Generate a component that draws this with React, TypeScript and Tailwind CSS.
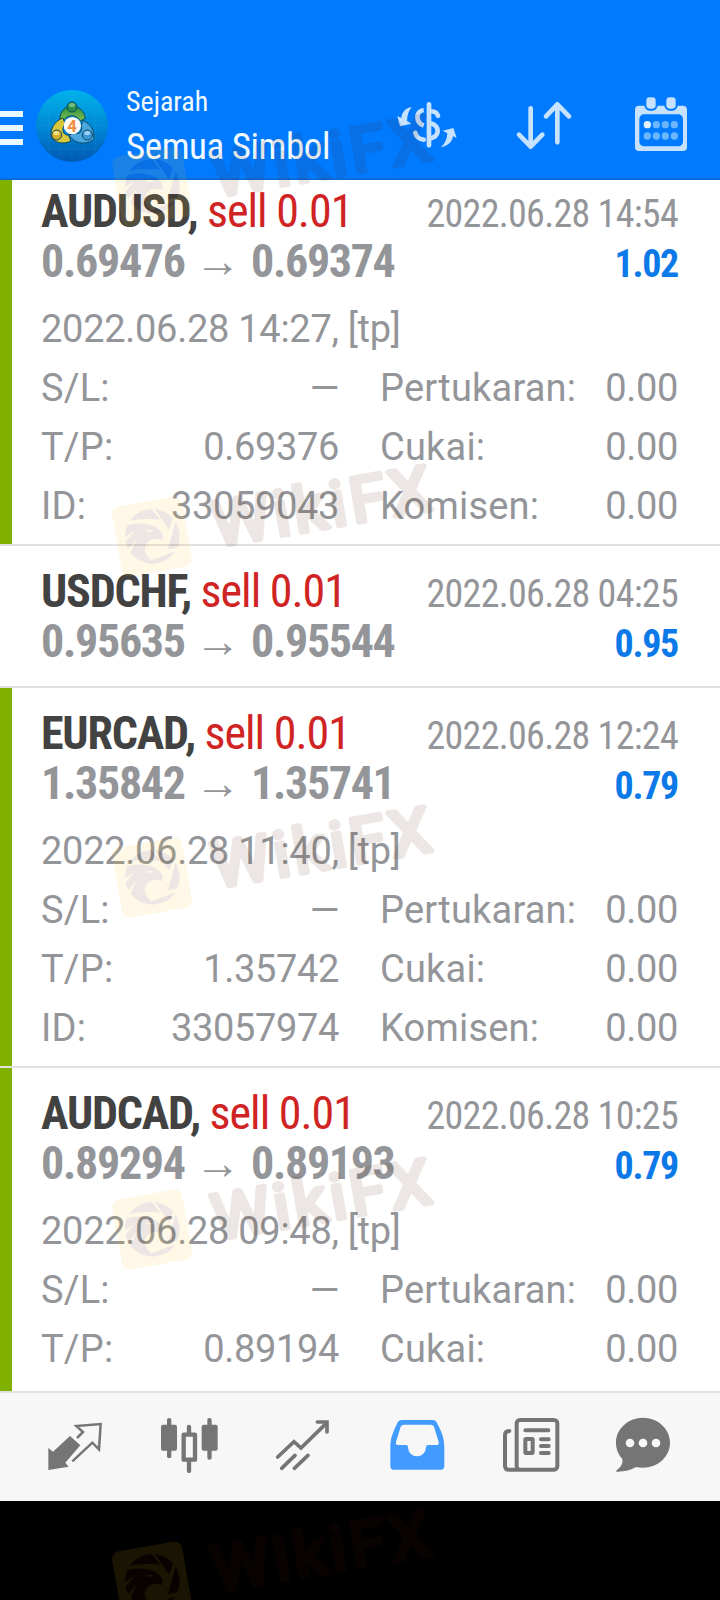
type Details = {
  opened: string;
  tp: string;
  id?: string;
};

type Deal = {
  symbol: string;
  volume: string;
  open: string;
  close: string;
  closedAt: string;
  profit: string;
  details?: Details;
};

const deals: Deal[] = [
  {
    symbol: "AUDUSD",
    volume: "0.01",
    open: "0.69476",
    close: "0.69374",
    closedAt: "2022.06.28 14:54",
    profit: "1.02",
    details: { opened: "2022.06.28 14:27", tp: "0.69376", id: "33059043" },
  },
  {
    symbol: "USDCHF",
    volume: "0.01",
    open: "0.95635",
    close: "0.95544",
    closedAt: "2022.06.28 04:25",
    profit: "0.95",
  },
  {
    symbol: "EURCAD",
    volume: "0.01",
    open: "1.35842",
    close: "1.35741",
    closedAt: "2022.06.28 12:24",
    profit: "0.79",
    details: { opened: "2022.06.28 11:40", tp: "1.35742", id: "33057974" },
  },
  {
    symbol: "AUDCAD",
    volume: "0.01",
    open: "0.89294",
    close: "0.89193",
    closedAt: "2022.06.28 10:25",
    profit: "0.79",
    details: { opened: "2022.06.28 09:48", tp: "0.89194" },
  },
];

const watermarkTops = [146, 496, 837, 1189, 1541];

function Logo() {
  return (
    <svg className="w-[72px] h-[72px] shrink-0 mt-[10px]" viewBox="17 31 216 216">
      <defs>
        <linearGradient id="sky" x1="0" y1="0" x2="0" y2="1">
          <stop offset="0" stopColor="#00b2ea" />
          <stop offset="0.5" stopColor="#0089d6" />
          <stop offset="1" stopColor="#0058b4" />
        </linearGradient>
        <linearGradient id="green" x1="0" y1="0" x2="0" y2="1">
          <stop offset="0" stopColor="#2f8f45" />
          <stop offset="1" stopColor="#7cc04c" />
        </linearGradient>
      </defs>
      <circle cx="125" cy="139" r="108" fill="url(#sky)" />
      <g stroke="#4cc4ee" strokeOpacity="0.18" strokeWidth="1.5">
        <path d="M55 58V220M90 37V241M125 31V247M160 37V241M195 58V220" />
        <path d="M44 68H206M23 103H227M17 138H233M23 173H227M44 208H206" />
      </g>
      <g stroke="#0b4a63" strokeWidth="3">
        <path d="M88 118C90 92 106 80 125 80C146 80 162 94 165 116L150 124C138 104 114 104 102 120Z" fill="url(#green)" />
        <path d="M98 115C72 124 60 148 62 170C72 190 98 196 122 184L114 166C98 168 92 148 104 132Z" fill="#d8c63c" />
        <path d="M158 122C182 134 194 154 190 178C172 196 134 196 116 166L132 160C150 166 158 152 152 138Z" fill="#4ba6e0" />
        <circle cx="125" cy="82" r="15" fill="#2c9050" />
        <circle cx="79" cy="166" r="15" fill="#d3ae2c" />
        <circle cx="171" cy="166" r="15" fill="#3c98d8" />
      </g>
      <ellipse cx="125" cy="76" rx="9" ry="6" fill="#a6e0a0" fillOpacity="0.6" />
      <ellipse cx="78" cy="160" rx="9" ry="6" fill="#fff3a0" fillOpacity="0.7" />
      <ellipse cx="171" cy="160" rx="9" ry="6" fill="#c4ecff" fillOpacity="0.7" />
      <circle cx="126" cy="138" r="26" fill="#fbfbf8" />
      <text x="125" y="156" textAnchor="middle" fill="#f08c3c" className="font-['Roboto'] text-[50px] font-bold">
        4
      </text>
    </svg>
  );
}

function CurrencyIcon() {
  return (
    <svg className="w-[80px] h-[70px] mt-[10px]" viewBox="0 0 240 210" fill="none" stroke="#c6e2ff" strokeWidth="14">
      <path d="M117 43V166" strokeLinecap="round" />
      <path d="M119 64Q139 62 144 77" strokeLinecap="round" />
      <path d="M119 99Q144 105 143 125Q140 143 119 145" />
      <path d="M101 60C76 64 76 97 101 107" />
      <path d="M76 129Q81 147 101 149" strokeLinecap="round" />
      <path d="M65 51C47 53 36 66 34 84L22 78L30 109L64 101L51 93C51 77 56 63 65 51Z" fill="#c6e2ff" stroke="none" />
      <path d="M153 172C172 167 187 157 189 138L200 144L190 114L158 122L172 130C171 148 165 161 153 172Z" fill="#c6e2ff" stroke="none" />
    </svg>
  );
}

function SortIcon() {
  return (
    <svg
      className="w-[80px] h-[70px] mt-[10px] ml-[34px]"
      viewBox="0 0 240 210"
      fill="none"
      stroke="#c6e2ff"
      strokeWidth="14"
      strokeLinecap="round"
      strokeLinejoin="round"
    >
      <path d="M80 55V168M45 134L80 170L115 134" />
      <path d="M160 157V44M126 79L160 43L195 79" />
    </svg>
  );
}

function CalendarIcon() {
  return (
    <svg className="w-[80px] h-[70px] mt-[10px] ml-[36px]" viewBox="0 0 240 210">
      <rect x="45" y="47" width="156" height="136" rx="12" fill="#c6e2ff" />
      <rect x="58" y="73" width="131" height="96" rx="14" fill="#007aff" />
      <rect x="76" y="19" width="34" height="40" rx="13" fill="#c6e2ff" stroke="#007aff" strokeWidth="6" />
      <rect x="136" y="19" width="34" height="40" rx="13" fill="#c6e2ff" stroke="#007aff" strokeWidth="6" />
      <g fill="#6cb5ff">
        <circle cx="82" cy="104" r="11" fill="#e6f3ff" />
        <circle cx="109" cy="104" r="11" />
        <circle cx="136" cy="104" r="11" />
        <circle cx="163" cy="104" r="11" />
        <circle cx="82" cy="138" r="11" />
        <circle cx="109" cy="138" r="11" />
        <circle cx="136" cy="138" r="11" />
        <circle cx="163" cy="138" r="11" />
      </g>
    </svg>
  );
}

function Header() {
  return (
    <header className="flex items-start h-[180px] pt-20 pr-5 bg-[#007aff] border-b-2 border-[#086cd8] shrink-0 font-['Roboto_Condensed','Roboto',sans-serif]">
      <button className="w-[23px] mt-[31px] mr-[13px] flex flex-col gap-[8px]">
        <span className="h-[6px] w-full bg-[#e9f8ff]" />
        <span className="h-[6px] w-full bg-[#e9f8ff]" />
        <span className="h-[6px] w-full bg-[#e9f8ff]" />
      </button>
      <Logo />
      <div className="ml-[18px] mt-px flex-1 text-[#f2faff] whitespace-nowrap">
        <div className="text-[28px] leading-[42px]">Sejarah</div>
        <div className="text-[37px] leading-[48px] tracking-[-0.45px]">Semua Simbol</div>
      </div>
      <CurrencyIcon />
      <SortIcon />
      <CalendarIcon />
    </header>
  );
}

function Field({ label, value }: { label: string; value: string }) {
  return (
    <div className="flex justify-between">
      <span className="tracking-[0.2px]">{label}</span>
      <span className="tracking-[-0.35px]">{value}</span>
    </div>
  );
}

function DealRow({ deal }: { deal: Deal }) {
  const { details } = deal;

  return (
    <div
      className={`border-b-2 border-[#e1e1e2] ${details ? "h-[380px]" : "h-[142px]"}`}
    >
      <div
        className={`h-full pt-5 pr-[42px] whitespace-nowrap ${
          details ? "border-l-[12px] border-[#80b000] pl-[29px]" : "pl-[41px]"
        }`}
      >
        <div className="font-['Roboto_Condensed','Roboto',sans-serif]">
          <div className="flex items-baseline justify-between h-[50px] text-[46px] leading-[50px]">
            <div>
              <span className="font-bold text-[#424242] tracking-[-1.2px]">{deal.symbol}, </span>
              <span className="text-[#d02323] tracking-[-1px]">sell {deal.volume}</span>
            </div>
            <span className="text-[38px] text-[#949599] tracking-[-0.7px]">{deal.closedAt}</span>
          </div>
          <div className="flex items-baseline justify-between h-[50px] text-[46px] leading-[50px] font-bold">
            <div className="text-[#949599] tracking-[-0.3px]">
              <span className="tracking-[-1.3px]">{deal.open}</span> →{" "}
              <span className="tracking-[-1.35px]">{deal.close}</span>
            </div>
            <span className="text-[38px] text-[#0c79e9] tracking-[-1.3px]">{deal.profit}</span>
          </div>
        </div>
        {details && (
          <div className="mt-[14px] font-['Roboto',sans-serif] text-[38px] leading-[59px] text-[#949599]">
            <div className="tracking-[-0.28px]">{details.opened}, [tp]</div>
            <div className="grid grid-cols-2 gap-x-[41px]">
              <Field label="S/L:" value="—" />
              <Field label="Pertukaran:" value="0.00" />
              <Field label="T/P:" value={details.tp} />
              <Field label="Cukai:" value="0.00" />
              {details.id && (
                <>
                  <Field label="ID:" value={details.id} />
                  <Field label="Komisen:" value="0.00" />
                </>
              )}
            </div>
          </div>
        )}
      </div>
    </div>
  );
}

function TabBar() {
  return (
    <nav className="flex items-start justify-between h-[110px] shrink-0 pl-[35px] pr-[37px] pt-[17px] border-t-2 border-[#e1e1e2] bg-[#f7f7f7] text-[#757575]">
      <svg className="w-[80px] h-[74px]" viewBox="105 90 240 222">
        <path d="M145 204L159 215L210 168L241 196L196 248L206 260L145 270Z" fill="currentColor" />
        <path
          d="M217 244L277 188L297 208L302 132L229 138L249 156L231 174"
          fill="none"
          stroke="currentColor"
          strokeWidth="7.5"
        />
      </svg>
      <svg className="w-[80px] h-[74px]" viewBox="446 90 240 222" fill="currentColor">
        <rect x="482" y="134" width="48" height="78" rx="6" />
        <rect x="500" y="114" width="13" height="121" rx="6" />
        <rect x="604" y="134" width="48" height="78" rx="6" />
        <rect x="621" y="114" width="13" height="125" rx="6" />
        <path d="M566 141V160M566 242V273" stroke="currentColor" strokeWidth="13" strokeLinecap="round" />
        <rect x="550" y="164" width="34" height="75" fill="none" stroke="currentColor" strokeWidth="13" strokeLinejoin="round" />
      </svg>
      <svg
        className="w-[80px] h-[74px]"
        viewBox="786 90 240 222"
        fill="none"
        stroke="currentColor"
        strokeWidth="11"
        strokeLinecap="round"
      >
        <path d="M833 231L882 185L903 204L978 131" />
        <path d="M952 126H981V156" />
        <path d="M845 265L885 226M883 265L924 226" />
      </svg>
      <svg className="w-[80px] h-[74px]" viewBox="47 90 240 222">
        <path
          fillRule="evenodd"
          fill="#429bff"
          d="M90 200C90 168 104 146 111 129Q115 120 125 120H217Q226 120 230 129C240 148 252 170 252 200V258Q252 269 242 269H100Q90 269 90 258ZM131 134Q124 134 121 140L107 186Q105 195 112 195H137Q143 195 143 202A27 27 0 0 0 197 202Q197 195 203 195H230Q237 195 235 186L221 140Q218 134 211 134Z"
        />
      </svg>
      <svg
        className="w-[80px] h-[74px]"
        viewBox="388 90 240 222"
        fill="none"
        stroke="currentColor"
        strokeWidth="12"
        strokeLinecap="round"
      >
        <rect x="471" y="120" width="122" height="149" rx="10" />
        <path d="M449 153Q436 153 436 165V257Q436 269 448 269H475" />
        <path d="M497 151H566M544 178H567M544 198H567M544 219H567" />
        <rect x="497" y="177" width="22" height="42" rx="2" />
      </svg>
      <svg className="w-[80px] h-[74px]" viewBox="729 90 240 222">
        <path
          d="M849 113C894 113 930 147 930 188S894 263 849 263Q838 263 828 261C812 270 790 276 770 275C766 273 770 270 775 266Q790 254 787 236C775 224 768 207 768 188C768 147 804 113 849 113Z"
          fill="currentColor"
        />
        <g fill="#f7f7f7">
          <circle cx="810" cy="189" r="13" />
          <circle cx="849" cy="189" r="13" />
          <circle cx="888" cy="189" r="13" />
        </g>
      </svg>
    </nav>
  );
}

function Watermark() {
  return (
    <svg className="absolute inset-0 w-[720px] h-[1600px] pointer-events-none" viewBox="0 0 720 1600">
      {watermarkTops.map((top) => (
        <g key={top} transform={`translate(0 ${top})`} opacity="0.1">
          <rect x="116.5" y="5" width="71" height="71" rx="8" fill="#ffc220" transform="rotate(-10 152 40.5)" />
          <g transform="translate(100 -17) scale(0.3333)">
            <circle cx="157" cy="172" r="82" fill="#501e00" />
            <path
              d="M78 127Q130 116 180 122L156 91L162 88L208 152L219 118L227 124L211 186L203 211L238 205L236 213L154 244Q138 232 134 214Q134 192 152 182Q170 176 184 184Q193 172 184 160Q172 142 146 137Q116 130 86 138Z"
              fill="#ffc220"
            />
            <path d="M134 152L160 154Q150 164 134 152Z" fill="#ffc220" />
            <path d="M72 176L104 156L76 188ZM82 214L110 180L90 224Z" fill="#ffc220" />
          </g>
          <text
            x="216"
            y="51"
            transform="rotate(-9.8 216 51)"
            textLength="225"
            lengthAdjust="spacingAndGlyphs"
            fill="#501e00"
            stroke="#501e00"
            strokeWidth="5"
            strokeLinejoin="round"
            className="font-['Roboto'] text-[63px] tracking-[4px]"
          >
            WikiFX
          </text>
        </g>
      ))}
    </svg>
  );
}

export default function App() {
  return (
    <div className="relative flex flex-col w-[720px] h-[1600px] overflow-hidden bg-black">
      <Header />
      <main className="h-[1211px] shrink-0 overflow-hidden bg-white">
        <div className="-mt-[14px]">
          {deals.map((deal) => (
            <DealRow key={deal.symbol} deal={deal} />
          ))}
        </div>
      </main>
      <TabBar />
      <Watermark />
    </div>
  );
}
